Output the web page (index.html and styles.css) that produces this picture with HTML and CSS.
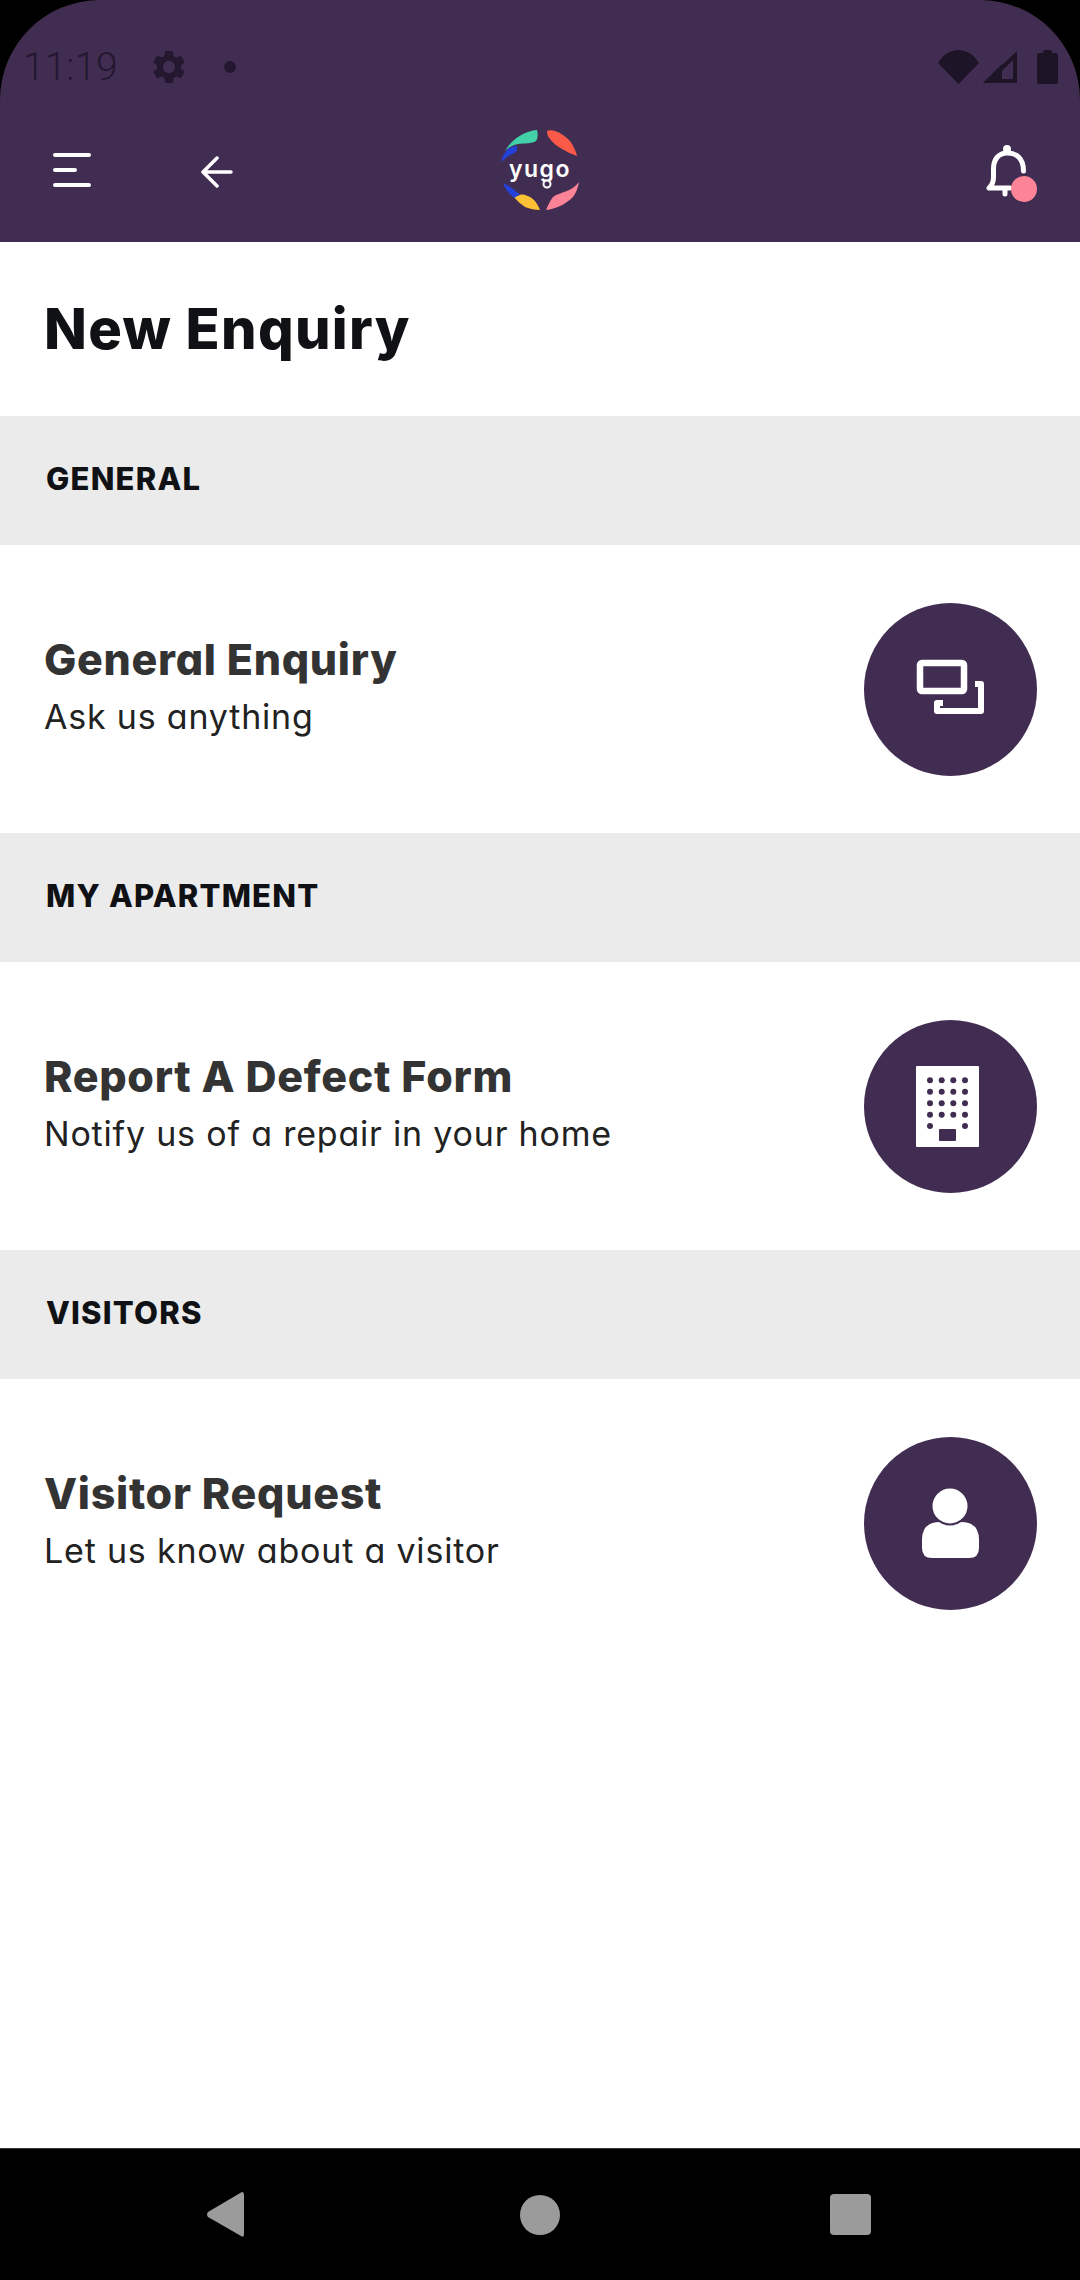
FILE: index.html
```html
<!DOCTYPE html>
<html lang="en">
<head>
    <meta charset="UTF-8">
    <meta name="viewport" content="width=device-width, initial-scale=1.0">
    <title>New Enquiry</title>
    <link rel="stylesheet" href="styles.css">
</head>
<body>
    <header class="header">
        <div class="status-bar">
            <span class="time">11:19</span>
            <svg class="gear" viewBox="0 0 24 24"><path d="M19.14 12.94c.04-.3.06-.61.06-.94 0-.32-.02-.64-.07-.94l2.03-1.58c.18-.14.23-.41.12-.61l-1.92-3.32c-.12-.22-.37-.29-.59-.22l-2.39.96c-.5-.38-1.03-.7-1.62-.94l-.36-2.54c-.04-.24-.24-.41-.48-.41h-3.84c-.24 0-.43.17-.47.41l-.36 2.54c-.59.24-1.13.57-1.62.94l-2.39-.96c-.22-.08-.47 0-.59.22L2.74 8.87c-.12.21-.08.47.12.61l2.03 1.58c-.05.3-.09.63-.09.94s.02.64.07.94l-2.03 1.58c-.18.14-.23.41-.12.61l1.92 3.32c.12.22.37.29.59.22l2.39-.96c.5.38 1.03.7 1.62.94l.36 2.54c.05.24.24.41.48.41h3.84c.24 0 .44-.17.47-.41l.36-2.54c.59-.24 1.13-.56 1.62-.94l2.39.96c.22.08.47 0 .59-.22l1.92-3.32c.12-.22.07-.47-.12-.61l-2.01-1.58zM12 15.6c-1.98 0-3.6-1.62-3.6-3.6s1.62-3.6 3.6-3.6 3.6 1.62 3.6 3.6-1.62 3.6-3.6 3.6z"/></svg>
            <span class="status-dot"></span>
            <div class="status-right">
                <svg class="wifi" viewBox="0 0 41 34"><path d="M0 13C5 5 12 0 20.500 0S36 5 41 13L20.500 34Z"/></svg>
                <svg class="signal" viewBox="0 0 34 32"><path d="M34 0V32H0ZM30 9 19 20V28H30Z" fill-rule="evenodd"/><path d="M0 32 19 13V32Z"/></svg>
                <svg class="battery" viewBox="0 0 21 34"><path d="M6 3V2Q6 0 8 0H13Q15 0 15 2V3H19Q21 3 21 5V32Q21 34 19 34H2Q0 34 0 32V5Q0 3 2 3Z"/></svg>
            </div>
        </div>
        <div class="toolbar">
            <div class="toolbar-left">
                <svg class="menu-icon" viewBox="0 0 38 36" fill="none" stroke="#fff" stroke-width="4" stroke-linecap="round">
                    <path d="M2 3H36M2 18H22M2 33H36"/>
                </svg>
                <svg class="back-icon" viewBox="0 0 32 32" fill="none" stroke="#fff" stroke-width="3.500" stroke-linecap="round" stroke-linejoin="round">
                    <path d="M16 2 2 16 16 30M2 16H30"/>
                </svg>
            </div>
            <svg class="logo" viewBox="58 29 84 84">
                <path fill="#42d1a8" d="M65 52C71 41 84 32 97 31C98 35 98 39 96 42C92 45 84 44 78 45C72 46 68 49 65 52Z"/>
                <path fill="#2340d8" d="M61 63C62 57 65 53 68 50C71 48 74 47 77 47C77 50 77 52 76 53C73 55 69 56 67 58Z"/>
                <path fill="#fb5a48" d="M107 32C109 31 112 31 115 32C121 34 126 38 130 42C133 46 136 52 137 57C132 55 127 53 122 50C117 47 113 44 110 40C108 38 107 35 107 32Z"/>
                <path fill="#fd8497" d="M139 83C138 89 136 94 133 98C126 105 116 110 106 111C108 106 110 102 113 98C117 95 122 94 127 92C132 90 136 87 139 83Z"/>
                <path fill="#fcc035" d="M74 98C77 96 81 95 85 96C89 97 92 99 95 102C97 105 99 108 100 111C95 111 90 110 85 108C81 105 77 102 74 98Z"/>
                <path fill="#2340d8" d="M63 84C70 87 76 92 80 96C78 97 75 98 74 99C69 95 65 90 63 84Z"/>
                <text class="logo-text" x="100" y="78" text-anchor="middle">yugo</text>
                <circle cx="107" cy="85" r="3.500" fill="#422d52" stroke="#fff" stroke-width="2"/>
            </svg>
            <div class="toolbar-right">
                <div class="bell">
                    <svg class="bell-icon" viewBox="0 0 60 60" fill="none" stroke="#fff" stroke-width="5" stroke-linecap="round" stroke-linejoin="round">
                        <path d="M43.500 31C43.500 18 36 13 27 13C18 13 13.500 20 13.500 29V37Q13.500 44 9 48H30M25 48V54"/>
                        <circle cx="27" cy="9" r="3" fill="#fff" stroke-width="2"/>
                    </svg>
                    <span class="bell-badge"></span>
                </div>
            </div>
        </div>
    </header>

    <main class="content">
        <h1 class="page-title">New Enquiry</h1>

        <h2 class="section-title">GENERAL</h2>
        <div class="row">
            <div class="row-text">
                <h3>General Enquiry</h3>
                <p>Ask us anything</p>
            </div>
            <div class="row-circle">
                <svg viewBox="0 0 172 172" fill="none" stroke="#fff">
                    <rect x="56" y="60" width="44" height="28" rx="2" stroke-width="6.500"/>
                    <path d="M111 81H117V108H73V100H79" stroke-width="6" stroke-linejoin="round"/>
                </svg>
            </div>
        </div>

        <h2 class="section-title">MY APARTMENT</h2>
        <div class="row">
            <div class="row-text">
                <h3>Report A Defect Form</h3>
                <p>Notify us of a repair in your home</p>
            </div>
            <div class="row-circle">
                <svg viewBox="0 0 172 172" fill="#422d52">
                    <rect x="52" y="46" width="63" height="81" rx="1" fill="#fff"/>
                    <g>
                        <circle cx="66" cy="60.300" r="3"/><circle cx="77.700" cy="60.300" r="3"/><circle cx="89.300" cy="60.300" r="3"/><circle cx="101" cy="60.300" r="3"/>
                        <circle cx="66" cy="71.700" r="3"/><circle cx="77.700" cy="71.700" r="3"/><circle cx="89.300" cy="71.700" r="3"/><circle cx="101" cy="71.700" r="3"/>
                        <circle cx="66" cy="83.300" r="3"/><circle cx="77.700" cy="83.300" r="3"/><circle cx="89.300" cy="83.300" r="3"/><circle cx="101" cy="83.300" r="3"/>
                        <circle cx="66" cy="94.700" r="3"/><circle cx="77.700" cy="94.700" r="3"/><circle cx="89.300" cy="94.700" r="3"/><circle cx="101" cy="94.700" r="3"/>
                        <circle cx="66" cy="106" r="3"/><circle cx="101" cy="106" r="3"/>
                    </g>
                    <rect x="75" y="109" width="17" height="12" rx="1"/>
                </svg>
            </div>
        </div>

        <h2 class="section-title">VISITORS</h2>
        <div class="row">
            <div class="row-text">
                <h3>Visitor Request</h3>
                <p>Let us know about a visitor</p>
            </div>
            <div class="row-circle">
                <svg viewBox="0 0 172 172" fill="#fff">
                    <path d="M58 103Q58 85 76 85H97Q115 85 115 103V111Q115 121 105 121H68Q58 121 58 111Z"/>
                    <circle cx="86" cy="69" r="18.500" stroke="#422d52" stroke-width="2"/>
                </svg>
            </div>
        </div>
    </main>

    <nav class="nav-bar">
        <svg class="nav-back" viewBox="0 0 37 45"><path d="M1 25Q-1 22.500 1 20L34 .5Q37-1 37 3V42Q37 46 34 44Z" /></svg>
        <span class="nav-home"></span>
        <span class="nav-recent"></span>
    </nav>
</body>
</html>
```

FILE: styles.css
```css
* {
    box-sizing: border-box;
}
html, body {
    margin: 0;
    padding: 0;
}
body {
    width: 1080px;
    height: 2280px;
    background-color: #000;
    font-family: Inter, "Liberation Sans", sans-serif;
    font-feature-settings: "cv11";
    display: flex;
    flex-direction: column;
    overflow: hidden;
}

/* header */
.header {
    height: 242px;
    background-color: #422d52;
    border-radius: 100px 100px 0 0;
}
.status-bar {
    height: 106px;
    padding: 28px 22px 0 23px;
    display: flex;
    align-items: center;
    fill: #1e1428;
}
.time {
    font-family: Roboto, sans-serif;
    font-weight: 300;
    font-size: 39px;
    color: #241830;
    width: 94px;
}
.gear {
    width: 40px;
    height: 40px;
    margin-left: 32px;
    fill: #241830;
}
.status-dot {
    width: 12px;
    height: 12px;
    margin-left: 35px;
    border-radius: 50%;
    background-color: #241830;
}
.status-right {
    margin-left: auto;
    display: flex;
    align-items: center;
    gap: 4px;
}
.wifi {
    width: 41px;
    height: 34px;
}
.signal {
    width: 34px;
    height: 32px;
    margin-right: 16px;
}
.battery {
    width: 21px;
    height: 34px;
}
.toolbar {
    height: 136px;
    padding-bottom: 8px;
    display: grid;
    grid-template-columns: 1fr auto 1fr;
    align-items: center;
}
.toolbar-left {
    padding-left: 53px;
    display: flex;
    align-items: center;
    gap: 110px;
}
.menu-icon {
    width: 38px;
    height: 36px;
}
.back-icon {
    width: 32px;
    height: 32px;
    margin-top: 3px;
}
.logo {
    width: 84px;
    height: 84px;
    display: block;
}
.logo-text {
    font-size: 23px;
    font-weight: 600;
    letter-spacing: 1.500px;
    fill: #fff;
}
.toolbar-right {
    display: flex;
    justify-content: flex-end;
    padding-right: 40px;
}
.bell {
    position: relative;
    width: 60px;
    height: 60px;
}
.bell-icon {
    width: 60px;
    height: 60px;
    display: block;
}
.bell-badge {
    position: absolute;
    left: 31px;
    top: 36px;
    width: 26px;
    height: 26px;
    border-radius: 50%;
    background-color: #fd8497;
}

/* content */
.content {
    flex: 1;
    background-color: #fff;
}
.page-title {
    height: 174px;
    margin: 0;
    padding-left: 44px;
    display: flex;
    align-items: center;
    font-size: 56px;
    font-weight: 800;
    letter-spacing: 1.300px;
    color: #101114;
}
.section-title {
    height: 129px;
    margin: 0;
    padding: 0 0 5px 46px;
    display: flex;
    align-items: center;
    background-color: #ebebeb;
    font-size: 31px;
    font-weight: 800;
    letter-spacing: 1.200px;
    color: #101114;
}
.row {
    height: 288px;
    padding: 0 43px 0 44px;
    display: flex;
    align-items: center;
    justify-content: space-between;
}
.row-text {
    margin-top: -8px;
}
.row-text h3 {
    margin: 0 0 11px;
    font-size: 43px;
    font-weight: 800;
    letter-spacing: .7px;
    color: #333;
}
.row-text p {
    margin: 0;
    font-size: 34px;
    letter-spacing: .8px;
    color: #222;
}
.row-circle {
    width: 173px;
    height: 173px;
    border-radius: 50%;
    background-color: #422d52;
}
.row-circle svg {
    width: 172px;
    height: 172px;
    display: block;
}

/* android nav */
.nav-bar {
    height: 132px;
    border-top: 1px solid #333;
    background-color: #000;
    display: flex;
    align-items: center;
    padding: 0 0 0 207px;
}
.nav-back {
    width: 37px;
    height: 45px;
    fill: #9b9b9b;
}
.nav-home {
    width: 40px;
    height: 40px;
    margin-left: 276px;
    border-radius: 50%;
    background-color: #9b9b9b;
}
.nav-recent {
    width: 41px;
    height: 41px;
    margin-left: 270px;
    border-radius: 4px;
    background-color: #9b9b9b;
}
```
